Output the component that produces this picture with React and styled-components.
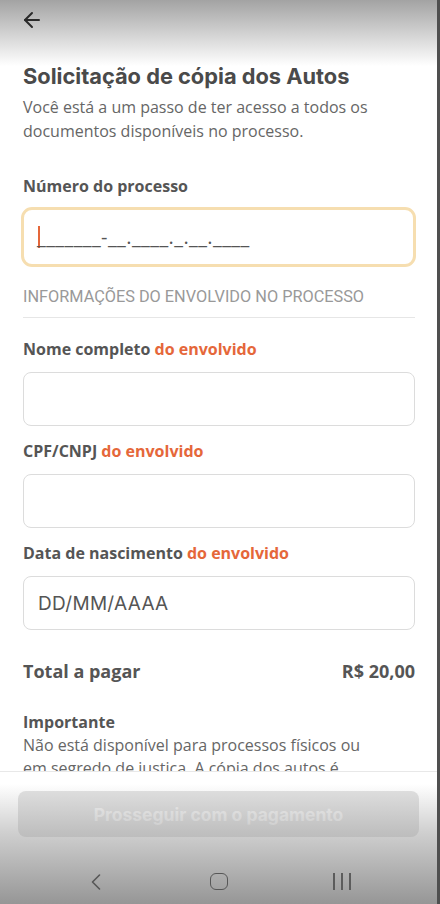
import React from 'react';
import styled, { createGlobalStyle } from 'styled-components';
import { ArrowLeft, ChevronLeft } from 'lucide-react';

const GlobalStyle = createGlobalStyle`
  html, body {
    margin: 0;
    padding: 0;
    background: #fff;
  }
  * {
    box-sizing: border-box;
  }
`;

const Screen = styled.div`
  position: relative;
  width: 440px;
  height: 904px;
  display: flex;
  flex-direction: column;
  background: #fff;
  font-family: 'Open Sans', 'Noto Sans', sans-serif;
  overflow: hidden;
  border-right: 3px solid #4f4f4f;
`;

const Shade = styled.div`
  position: absolute;
  left: 0;
  right: 0;
  pointer-events: none;
  ${({ $bottom }) =>
    $bottom
      ? `bottom: 0; height: 120px; background: linear-gradient(to bottom, rgba(150,150,150,0) 0%, rgba(150,150,150,0.45) 40%, rgba(150,150,150,1) 100%);`
      : `top: 0; height: 66px; background: linear-gradient(to bottom, rgba(163,163,163,1) 0%, rgba(163,163,163,0.45) 55%, rgba(163,163,163,0) 100%);`}
`;

const Header = styled.div`
  position: relative;
  z-index: 2;
  height: 40px;
  display: flex;
  align-items: center;
  padding-left: 20px;
  color: #2a2a2a;
`;

const Content = styled.div`
  flex: 1;
  overflow: hidden;
  padding: 21px 22px 0 23px;
`;

const Title = styled.h1`
  margin: 0;
  font-family: 'Inter', 'Open Sans', sans-serif;
  font-size: 21.8px;
  font-weight: 700;
  color: #4a4a4a;
  line-height: 30px;
`;

const Subtitle = styled.p`
  margin: 4px 0 0;
  font-size: 16px;
  line-height: 24px;
  color: #666;
`;

const Label = styled.div`
  font-size: 16px;
  font-weight: 700;
  color: #555;
  line-height: 22px;
  margin: ${({ $first }) => ($first ? '32px 0 10px' : '14px 0 12px')};

  span {
    color: #e5673a;
  }
`;

const Field = styled.div`
  height: ${({ $focused }) => ($focused ? '60px' : '54px')};
  margin: ${({ $focused }) => ($focused ? '0 -1px 0 -2px' : '0')};
  border: ${({ $focused }) => ($focused ? '3px solid #f6deb0' : '1px solid #dcdcdc')};
  border-radius: ${({ $focused }) => ($focused ? '11px' : '8px')};
  display: flex;
  align-items: center;
  padding-left: 14px;
  background: #fff;
`;

const Mask = styled.div`
  display: flex;
  align-items: center;
  font-size: 20px;
  letter-spacing: 0.4px;
  color: #555;
  line-height: 22px;
`;

const Caret = styled.span`
  width: 2px;
  height: 22px;
  background: #e5673a;
  margin-right: -3px;
`;

const Placeholder = styled.span`
  font-family: 'Inter', 'Open Sans', sans-serif;
  font-size: 19px;
  color: #555;
  letter-spacing: 0.3px;
`;

const SectionTitle = styled.div`
  margin-top: 19px;
  padding-bottom: 9px;
  border-bottom: 1px solid #e6e6e6;
  font-family: 'Roboto', sans-serif;
  font-size: 16.3px;
  color: #999;
  line-height: 22px;
  margin-bottom: 20px;
`;

const TotalRow = styled.div`
  display: flex;
  justify-content: space-between;
  align-items: center;
  margin-top: 29px;
  font-size: 18px;
  line-height: 24px;
  font-weight: 700;
  color: #555;
`;

const Note = styled.div`
  margin-top: 28px;
  max-width: 350px;
  font-size: 16px;
  line-height: 23px;
  color: #666;

  strong {
    display: block;
    color: #555;
  }
`;

const Footer = styled.div`
  border-top: 1px solid #e8e8e8;
  padding: 19px 18px 0 18px;
  height: 133px;
  display: flex;
  flex-direction: column;
`;

const PayButton = styled.button`
  height: 46px;
  width: 100%;
  border: none;
  border-radius: 8px;
  background: #e2e2e2;
  color: #f6f6f6;
  font-family: 'Inter', 'Open Sans', sans-serif;
  font-size: 17.5px;
  font-weight: 700;
`;

const NavBar = styled.div`
  position: relative;
  z-index: 2;
  flex: 1;
  margin: 0 -18px;
  display: grid;
  grid-template-columns: repeat(3, 123px);
  justify-content: center;
  justify-items: center;
  align-items: center;
  padding-top: 22px;
  color: #575757;
`;

const Home = styled.div`
  width: 18px;
  height: 17px;
  border: 1.6px solid #575757;
  border-radius: 6px;
`;

const Recents = styled.div`
  display: flex;
  gap: 6px;

  i {
    width: 2px;
    height: 17px;
    background: #5c5c5c;
  }
`;

const App = () => (
  <>
    <GlobalStyle />
    <Screen>
      <Header>
        <ArrowLeft size={24} strokeWidth={2} />
      </Header>
      <Content>
        <Title>Solicitação de cópia dos Autos</Title>
        <Subtitle>
          Você está a um passo de ter acesso a todos os documentos disponíveis no processo.
        </Subtitle>

        <Label $first>Número do processo</Label>
        <Field $focused>
          <Mask>
            <Caret />
            _______-__.____._.__.____
          </Mask>
        </Field>

        <SectionTitle>INFORMAÇÕES DO ENVOLVIDO NO PROCESSO</SectionTitle>

        <Label>
          Nome completo <span>do envolvido</span>
        </Label>
        <Field />

        <Label>
          CPF/CNPJ <span>do envolvido</span>
        </Label>
        <Field />

        <Label>
          Data de nascimento <span>do envolvido</span>
        </Label>
        <Field>
          <Placeholder>DD/MM/AAAA</Placeholder>
        </Field>

        <TotalRow>
          <span>Total a pagar</span>
          <span>R$ 20,00</span>
        </TotalRow>

        <Note>
          <strong>Importante</strong>
          Não está disponível para processos físicos ou em segredo de justiça. A cópia dos autos é
          enviada para o seu e-mail.
        </Note>
      </Content>
      <Footer>
        <PayButton>Prosseguir com o pagamento</PayButton>
        <NavBar>
          <ChevronLeft size={28} strokeWidth={1.4} />
          <Home />
          <Recents>
            <i />
            <i />
            <i />
          </Recents>
        </NavBar>
      </Footer>
      <Shade />
      <Shade $bottom />
    </Screen>
  </>
);

export default App;
